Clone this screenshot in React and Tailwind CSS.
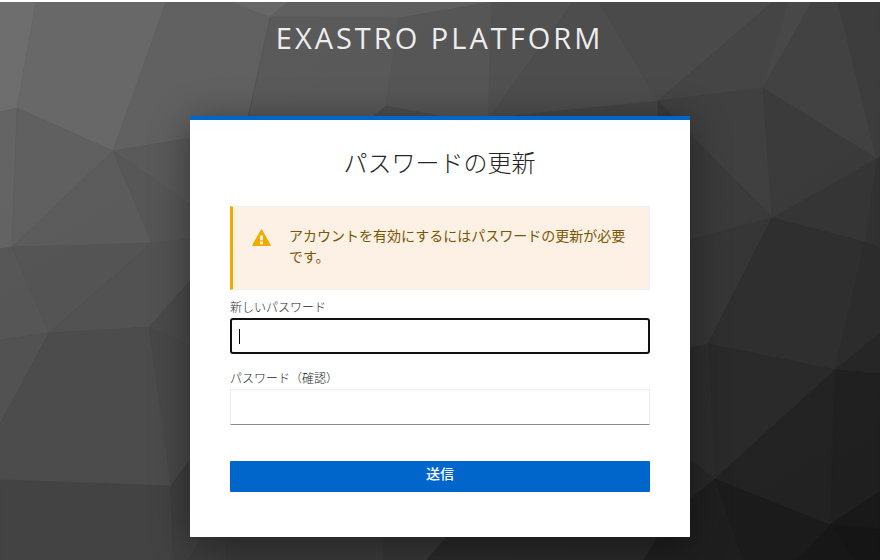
const facets = [
  ["0,2 36,2 17,108 0,112", "#6b6b6b"],
  ["36,2 166,2 113,151 17,108", "#656565"],
  ["166,2 232,2 270,17 248,116 248,140 190,138 113,151", "#5e5e5e"],
  ["232,2 288,2 270,17", "#656565"],
  ["270,17 288,2 492,2 399,18", "#5d5d5d"],
  ["270,17 399,18 386,106 372,120 248,120", "#575757"],
  ["399,18 492,2 488,120 372,120 386,106", "#545454"],
  ["492,2 573,2 488,120", "#4f4f4f"],
  ["573,2 599,2 658,101 520,115 488,120", "#4b4b4b"],
  ["386,106 440,116 372,117", "#4b4b4b"],
  ["599,2 773,2 658,101", "#484848"],
  ["773,2 788,2 763,88 658,101", "#434343"],
  ["788,2 812,2 763,88", "#464646"],
  ["812,2 838,2 877,159 763,88", "#404040"],
  ["838,2 880,2 880,157 877,159", "#3b3b3b"],
  ["520,115 658,101 659,120 520,120", "#434343"],
  ["658,101 763,88 772,218", "#3e3e3e"],
  ["763,88 877,159 772,218", "#393939"],
  ["877,159 865,242 772,218", "#343434"],
  ["877,159 880,157 880,248 865,242", "#303030"],
  ["658,101 772,218 690,240 659,240", "#393939"],
  ["690,240 772,218 708,344 690,348", "#353535"],
  ["772,218 865,242 835,370 708,344", "#2e2e2e"],
  ["865,242 880,248 880,333 835,370", "#2b2b2b"],
  ["835,370 880,333 880,374", "#252525"],
  ["708,344 835,370 715,479", "#292929"],
  ["690,348 708,344 715,479 690,460", "#2c2c2c"],
  ["690,460 715,479 690,499", "#262626"],
  ["835,370 880,374 880,491 830,525", "#1f1f1f"],
  ["835,370 830,525 715,479", "#222222"],
  ["830,525 880,491 880,529", "#191919"],
  ["830,525 880,529 880,560 854,560", "#151515"],
  ["830,525 854,560 796,560", "#171717"],
  ["715,479 830,525 796,560 743,560", "#1b1b1b"],
  ["715,479 743,560 643,560 657,537 690,499", "#1e1e1e"],
  ["0,112 17,108 12,247 0,249", "#616161"],
  ["17,108 113,151 12,247", "#5d5d5d"],
  ["113,151 152,243 12,247", "#595959"],
  ["113,151 190,138 190,204", "#575757"],
  ["113,151 190,204 190,239 152,243", "#545454"],
  ["12,247 152,243 49,333", "#525252"],
  ["0,249 12,247 49,333 0,340", "#545454"],
  ["152,243 190,239 190,281 149,327 49,333", "#505050"],
  ["0,340 49,333 0,424", "#505050"],
  ["49,333 149,327 171,486 0,480 0,424", "#4a4a4a"],
  ["190,281 190,346 149,327", "#484848"],
  ["149,327 190,346 190,459 171,486", "#464646"],
  ["0,480 171,486 173,560 0,560", "#414141"],
  ["171,486 190,459 226,480 226,537 203,537 188,560 173,560", "#3d3d3d"],
  ["203,537 226,530 226,560 188,560", "#3a3a3a"],
  ["226,530 384,530 384,560 226,560", "#383838"],
  ["384,530 452,530 427,560 384,560", "#343434"],
  ["452,530 661,530 643,560 427,560", "#282828"],
];

function Backdrop() {
  return (
    <svg className="absolute inset-0 h-full w-full" viewBox="0 0 880 560" aria-hidden="true">
      <defs>
        <linearGradient id="sheen" x1="0" y1="0" x2="1" y2="1">
          <stop offset="0" stopColor="#fff" stopOpacity="0.02" />
          <stop offset="1" stopColor="#fff" stopOpacity="0" />
        </linearGradient>
      </defs>
      {facets.map(([points, fill]) => (
        <polygon key={points} points={points} fill={fill} stroke={fill} strokeWidth="0.6" />
      ))}
      <rect width="880" height="560" fill="url(#sheen)" />
      <rect width="880" height="2" fill="#fff" />
    </svg>
  );
}

function WarningIcon() {
  return (
    <svg className="mt-[22px] ml-[19px] h-[18px] w-[19px] shrink-0" viewBox="0 0 19 18" aria-hidden="true">
      <path d="M9.5 1.2 18.1 16.3H.9Z" fill="#f0ab00" stroke="#f0ab00" strokeWidth="1.4" strokeLinejoin="round" />
      <path d="M8 6.5h3v4.8H8zM8 12.6h3v2.6H8z" fill="#fdf0e5" />
    </svg>
  );
}

export default function App() {
  return (
    <div className="relative h-[560px] w-[880px] overflow-hidden bg-[#393939] font-['Open_Sans','Noto_Sans_CJK_JP',sans-serif] text-[#252525]">
      <Backdrop />
      <div className="relative flex flex-col items-center">
        <header className="flex h-[116px] items-start pt-[18px]">
          <h1 className="pr-px text-[29px] leading-10 tracking-[3px] whitespace-nowrap text-[#ededed]">EXASTRO PLATFORM</h1>
        </header>
        <main className="h-[421px] w-[500px] border-t-4 border-[#0066cc] bg-white px-10 shadow-[0_6px_36px_rgba(0,0,0,0.4)]">
          <h2 className="pt-[27px] pr-px text-center text-2xl leading-8 font-light">パスワードの更新</h2>
          <div className="mt-[27px] flex h-[84px] border border-l-[3px] border-[#ededed] border-l-[#f0ab00] bg-[#fdf0e5]">
            <WarningIcon />
            <p className="mt-[18px] ml-[18px] w-[340px] text-sm leading-[21px] text-[#795600]">
              アカウントを有効にするにはパスワードの更新が必要です。
            </p>
          </div>
          <form>
            <label className="mt-[9px] block h-[19px] text-xs leading-[18px] font-light">新しいパスワード</label>
            <div className="flex h-9 items-center rounded-[3px] border-2 border-[#101010] bg-white pl-[7px]">
              <span className="h-[15px] w-px bg-black" />
            </div>
            <label className="mt-4 block h-[19px] text-xs leading-[18px] font-light">パスワード（確認）</label>
            <div className="h-9 border border-[#ededed] border-b-[#8a8d90] bg-white" />
            <button type="button" className="mt-9 block h-[31px] w-full rounded-[1px] bg-[#0066cc] pb-1.5 text-center text-sm font-medium text-white">
              送信
            </button>
          </form>
        </main>
      </div>
    </div>
  );
}
